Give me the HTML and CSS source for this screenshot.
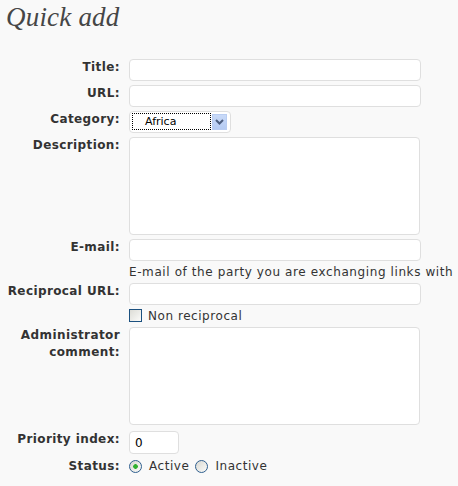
FILE: index.html
```html
<!DOCTYPE html>
<html>
<head>
<meta charset="utf-8">
<link rel="stylesheet" href="styles.css">
</head>
<body>
<div class="page">
  <h2 class="heading">Quick add</h2>
  <form class="form">
    <label class="lbl">Title:</label>
    <div class="field"><input class="txt" type="text"></div>

    <label class="lbl">URL:</label>
    <div class="field"><input class="txt" type="text"></div>

    <label class="lbl">Category:</label>
    <div class="field">
      <div class="select">
        <span class="select-value">Africa</span>
        <span class="select-arrow">
          <svg width="9" height="6" viewBox="0 0 9 6"><path d="M1 1 L4.5 4.5 L8 1" fill="none" stroke="#4d5f80" stroke-width="2"/></svg>
        </span>
      </div>
    </div>

    <label class="lbl">Description:</label>
    <div class="field"><textarea class="area"></textarea></div>

    <label class="lbl">E-mail:</label>
    <div class="field"><input class="txt" type="text"></div>

    <div class="lbl"></div>
    <div class="field help">E-mail of the party you are exchanging links with</div>

    <label class="lbl">Reciprocal URL:</label>
    <div class="field"><input class="txt" type="text"></div>

    <div class="lbl"></div>
    <div class="field check-row"><input class="check" type="checkbox"><span>Non reciprocal</span></div>

    <label class="lbl">Administrator comment:</label>
    <div class="field"><textarea class="area"></textarea></div>

    <label class="lbl prio-lbl">Priority index:</label>
    <div class="field prio-field"><input class="txt prio" type="text" value="0"></div>

    <label class="lbl">Status:</label>
    <div class="field radios">
      <input class="radio" type="radio" name="st" checked><span class="rtext">Active</span>
      <input class="radio" type="radio" name="st"><span class="rtext">Inactive</span>
    </div>
  </form>
</div>
</body>
</html>
```
FILE: styles.css
```css
html, body {
  margin: 0;
  background: #f9f9f9;
}
body {
  font-family: "DejaVu Sans", Verdana, sans-serif;
  font-size: 12px;
  color: #333;
  letter-spacing: 0.55px;
}
.heading {
  margin: 0;
  padding: 2px 0 0 6px;
  font: italic 27px/30px "Liberation Serif", Georgia, serif;
  letter-spacing: 0.2px;
  color: #464646;
  font-weight: normal;
}
.form {
  display: grid;
  grid-template-columns: 120px 1fr;
  column-gap: 9px;
  row-gap: 4px;
  margin-top: 27px;
}
.lbl {
  text-align: right;
  font-weight: bold;
  line-height: 17px;
  color: #333;
  letter-spacing: 0.4px;
  padding-right: 0;
}
.field {
  display: flex;
  align-items: flex-start;
}
.txt {
  box-sizing: border-box;
  width: 292px;
  height: 22px;
  margin: 0;
  border: 1px solid #dfdfdf;
  border-radius: 4px;
  background: #fff;
  font: 12px "DejaVu Sans", sans-serif;
  color: #000;
  padding: 0 5px;
  outline: none;
}
.area {
  box-sizing: border-box;
  width: 291px;
  height: 98px;
  margin: 0;
  border: 1px solid #dfdfdf;
  border-radius: 4px;
  background: #fff;
  resize: none;
  outline: none;
}
.select {
  box-sizing: border-box;
  width: 102px;
  height: 22px;
  border: 1px solid #dfdfdf;
  border-radius: 4px;
  background: #fff;
  padding: 1px 2px;
  display: flex;
  align-items: flex-start;
}
.select-value {
  box-sizing: border-box;
  width: 79px;
  height: 17px;
  border: 1px dotted #000;
  padding-left: 12px;
  font: 11px/15px "DejaVu Sans", sans-serif;
  letter-spacing: 0;
  color: #000;
}
.select-arrow {
  box-sizing: border-box;
  width: 15px;
  height: 16px;
  margin: 1px 0 0 1px;
  background: linear-gradient(#c9daf8, #b5cbf3);
  border: 1px solid #b9cdf2;
  display: flex;
  align-items: center;
  justify-content: center;
}
.help {
  line-height: 14px;
  white-space: nowrap;
  letter-spacing: 0.6px;
}
.check-row {
  line-height: 14px;
  align-items: flex-start;
}
.check {
  appearance: none;
  -webkit-appearance: none;
  box-sizing: border-box;
  width: 13px;
  height: 13px;
  margin: 0 6px 0 0;
  border: 1px solid #1c5180;
  background: linear-gradient(135deg, #dcdcd6, #fbfbf9);
}
.prio-lbl, .prio-field {
  margin-top: 2px;
}
.prio {
  width: 50px;
  height: 23px;
}
.radios {
  line-height: 17px;
  align-items: flex-start;
}
.radio {
  appearance: none;
  -webkit-appearance: none;
  box-sizing: border-box;
  width: 13px;
  height: 13px;
  margin: 2px 7px 0 0;
  border: 1px solid #2f5f8f;
  border-radius: 50%;
  background: linear-gradient(135deg, #d8d8d2, #fbfbf9);
}
.radio:checked {
  background: radial-gradient(circle, #30b030 0, #30b030 2px, rgba(48,176,48,0) 2.6px), linear-gradient(135deg, #d8d8d2, #fbfbf9);
}
.rtext {
  margin-right: 6px;
}
```
